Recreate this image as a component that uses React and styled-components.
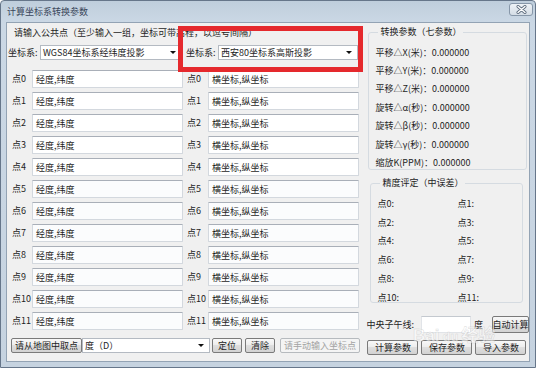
import React from 'react';
import styled, { createGlobalStyle } from 'styled-components';

const GlobalStyle = createGlobalStyle`
  html, body {
    margin: 0;
    padding: 0;
    background: #ffffff;
  }
  body {
    font-family: "Noto Sans CJK SC", "Noto Sans", sans-serif;
    font-size: 9px;
    color: #1e1e1e;
  }
`;

const points = Array.from({ length: 12 }, (_, i) => i);

const params = [
  '平移△X(米)：0.000000',
  '平移△Y(米)：0.000000',
  '平移△Z(米)：0.000000',
  '旋转△α(秒)：0.000000',
  '旋转△β(秒)：0.000000',
  '旋转△γ(秒)：0.000000',
  '缩放K(PPM)：0.000000',
];

export default function App() {
  return (
    <>
      <GlobalStyle />
      <Window>
        <TitleBar>
          <Title>计算坐标系转换参数</Title>
          <CloseButton>
            <svg width="11" height="9" viewBox="0 0 11 9">
              <path d="M2 1.5 L9 7.5 M9 1.5 L2 7.5" stroke="#5b6a7c" strokeWidth="3" strokeLinecap="round" />
              <path d="M2 1.5 L9 7.5 M9 1.5 L2 7.5" stroke="#ffffff" strokeWidth="1.4" strokeLinecap="round" />
            </svg>
          </CloseButton>
        </TitleBar>

        <Client>
          <LeftPane>
            <Prompt>请输入公共点（至少输入一组，坐标可带高程，以逗号间隔）</Prompt>

            <SystemRow>
              <Label>坐标系:</Label>
              <Combo>WGS84坐标系经纬度投影<Arrow /></Combo>
              <Label $pad={4}>坐标系:</Label>
              <Combo>西安80坐标系高斯投影<Arrow /></Combo>
            </SystemRow>

            <PointList>
              {points.map((i) => (
                <PointRow key={i}>
                  <Label>点{i}</Label>
                  <TextBox $shade={i >= 5}>经度,纬度</TextBox>
                  <Label $pad={4}>点{i}</Label>
                  <TextBox $shade={i >= 5}>横坐标,纵坐标</TextBox>
                </PointRow>
              ))}
            </PointList>

            <ActionRow>
              <Button $w={71}>请从地图中取点</Button>
              <Combo $w={128}>度（D）<Arrow /></Combo>
              <Button $w={30} $ml={2}>定位</Button>
              <Button $w={30} $ml={3}>清除</Button>
              <Button $w={80} $ml={5} disabled>请手动输入坐标点</Button>
            </ActionRow>
          </LeftPane>

          <RightPane>
            <Group $h={144} $ml={5} $mr={2}>
              <GroupTitle>转换参数（七参数）</GroupTitle>
              <ParamList>
                {params.map((p) => (
                  <ParamItem key={p}>{p}</ParamItem>
                ))}
              </ParamList>
            </Group>

            <Group $h={126} $ml={7} $mr={6} $mt={7}>
              <GroupTitle>精度评定（中误差）</GroupTitle>
              <ErrorGrid>
                {points.map((i) => (
                  <ErrorItem key={i}>点{i}:</ErrorItem>
                ))}
              </ErrorGrid>
            </Group>

            <MeridianRow>
              <Label>中央子午线:</Label>
              <MeridianBox />
              <Label $pad={3}>度</Label>
              <Button $w={37} $ml={9} $h={17}>自动计算</Button>
            </MeridianRow>

            <ButtonRow>
              <Button $w={51}>计算参数</Button>
              <Button $w={51}>保存参数</Button>
              <Button $w={51}>导入参数</Button>
            </ButtonRow>
          </RightPane>
        </Client>

        <Watermark>Bai<span>du</span>经验</Watermark>
        <Highlight />
      </Window>
    </>
  );
}

// Styled Components
const Window = styled.div`
  position: relative;
  box-sizing: border-box;
  width: 536px;
  height: 368px;
  display: flex;
  flex-direction: column;
  background: linear-gradient(#bfcedc, #cbd8e5 22px, #c6d3e0);
  border: 1px solid #66768a;
  border-radius: 4px 4px 0 0;
  overflow: hidden;
`;

const TitleBar = styled.div`
  height: 21px;
  display: flex;
  align-items: center;
  justify-content: space-between;
  padding: 0 2px 0 6px;
`;

const Title = styled.div`
  color: #39465a;
  font-size: 9px;
  line-height: 12px;
`;

const CloseButton = styled.div`
  width: 24px;
  height: 13px;
  margin-top: -4px;
  display: flex;
  align-items: center;
  justify-content: center;
  box-sizing: border-box;
  border: 1px solid #8797a9;
  border-radius: 3px;
  background: linear-gradient(#eef2f6, #d4dde6);
`;

const Client = styled.div`
  flex: 1;
  margin: 0 5px 5px 5px;
  display: flex;
  background: #f0f0f0;
  border: 1px solid #93a3b4;
`;

const LeftPane = styled.div`
  width: 358px;
  display: flex;
  flex-direction: column;
`;

const Prompt = styled.div`
  margin: 4px 0 0 7px;
  line-height: 12px;
  white-space: nowrap;
`;

const Label = styled.div`
  padding-left: ${(p) => p.$pad || 0}px;
  white-space: nowrap;
  line-height: 12px;
`;

const SystemRow = styled.div`
  margin-top: 6px;
  padding-left: 1px;
  height: 15px;
  display: grid;
  grid-template-columns: 32px 142px 36px 140px;
  align-items: center;
`;

const Combo = styled.div`
  position: relative;
  box-sizing: border-box;
  height: 15px;
  width: ${(p) => (p.$w ? `${p.$w}px` : 'auto')};
  padding-left: 2px;
  display: flex;
  align-items: center;
  background: #ffffff;
  border: 1px solid #b4bac2;
  white-space: nowrap;
  overflow: hidden;
`;

const Arrow = styled.span`
  position: absolute;
  right: 5px;
  top: 5px;
  border-left: 3px solid transparent;
  border-right: 3px solid transparent;
  border-top: 3px solid #111;
`;

const PointList = styled.div`
  margin-top: 10px;
  display: flex;
  flex-direction: column;
  gap: 4px;
`;

const PointRow = styled.div`
  height: 18px;
  padding-left: 5px;
  display: grid;
  grid-template-columns: 20px 151px 25px 151px;
  align-items: center;
`;

const TextBox = styled.div`
  box-sizing: border-box;
  height: 18px;
  padding-left: 3px;
  display: flex;
  align-items: center;
  background: ${(p) => (p.$shade ? '#fbfcfd' : '#ffffff')};
  border: 1px solid #d3d8de;
  border-top-color: #a9afb8;
  border-radius: 1px;
  white-space: nowrap;
`;

const ActionRow = styled.div`
  margin-top: 8px;
  padding-left: 4px;
  height: 15px;
  display: flex;
  align-items: center;
`;

const Button = styled.div`
  box-sizing: border-box;
  width: ${(p) => p.$w}px;
  height: ${(p) => p.$h || 15}px;
  margin-left: ${(p) => p.$ml || 0}px;
  display: flex;
  align-items: center;
  justify-content: center;
  white-space: nowrap;
  border-radius: 2px;
  color: ${(p) => (p.disabled ? '#a3a3a3' : '#1e1e1e')};
  border: 1px solid ${(p) => (p.disabled ? '#b6babe' : '#7a7a7a')};
  background: ${(p) =>
    p.disabled
      ? '#f4f4f4'
      : 'linear-gradient(#f8f8f8, #ececec 50%, #dedede 50%, #d2d2d2)'};
`;

const RightPane = styled.div`
  flex: 1;
  padding-top: 3px;
  display: flex;
  flex-direction: column;
`;

const Group = styled.fieldset`
  box-sizing: border-box;
  height: ${(p) => p.$h}px;
  margin: ${(p) => p.$mt || 0}px ${(p) => p.$mr}px 0 ${(p) => p.$ml}px;
  padding: 0 4px 0 6px;
  border: 1px solid #d5dbe1;
  border-radius: 3px;
  min-width: 0;
`;

const GroupTitle = styled.legend`
  padding: 0 2px;
  margin-left: 3px;
  line-height: 12px;
  font-size: 9px;
  color: #1e1e1e;
`;

const ParamList = styled.div`
  padding-top: 5px;
  display: flex;
  flex-direction: column;
`;

const ParamItem = styled.div`
  height: 18.4px;
  display: flex;
  align-items: center;
  white-space: nowrap;
`;

const ErrorGrid = styled.div`
  padding-top: 5px;
  display: grid;
  grid-template-columns: 80px 1fr;
  grid-auto-rows: 18.8px;
  align-items: center;
`;

const ErrorItem = styled.div`
  white-space: nowrap;
`;

const MeridianRow = styled.div`
  margin-top: 13px;
  padding-left: 3px;
  height: 17px;
  display: flex;
  align-items: center;
`;

const MeridianBox = styled.div`
  box-sizing: border-box;
  width: 50px;
  height: 17px;
  margin-left: 7px;
  background: #ffffff;
  border: 1px solid #e1e4e8;
  border-top-color: #c4c9cf;
`;

const ButtonRow = styled.div`
  margin-top: 7px;
  padding-left: 4px;
  display: flex;
  gap: 3px;
`;

const Watermark = styled.div`
  position: absolute;
  left: 412px;
  top: 320px;
  font-family: "Liberation Sans", "Noto Sans CJK SC", sans-serif;
  font-size: 17px;
  font-weight: bold;
  color: rgba(255, 255, 255, 0.55);
  -webkit-text-stroke: 0.5px rgba(150, 150, 150, 0.35);
  pointer-events: none;

  span {
    font-size: 13px;
    margin: 0 3px;
  }
`;

const Highlight = styled.div`
  position: absolute;
  left: 177px;
  top: 25px;
  width: 185px;
  height: 46px;
  box-sizing: border-box;
  border: 5px solid #e5292d;
`;
